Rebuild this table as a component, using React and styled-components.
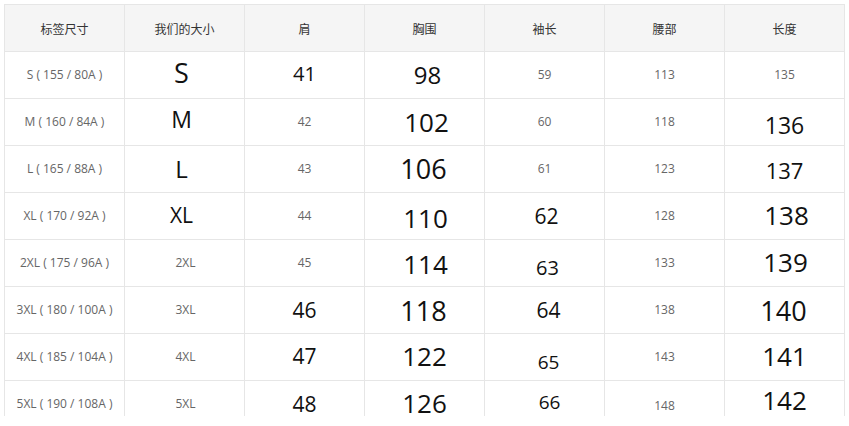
import styled, { createGlobalStyle } from "styled-components";

const headers = ["标签尺寸", "我们的大小", "肩", "胸围", "袖长", "腰部", "长度"];

// [text, fontSize, dy, dx]
const rows = [
    [["S ( 155 / 80A )"], ["S", 27, -3, -3], ["41", 20, -1.5], ["98", 24, 0, 3], ["59"], ["113"], ["135"]],
    [["M ( 160 / 84A )"], ["M", 23, -2.5, -3], ["42"], ["102", 26, 0, 2], ["60"], ["118"], ["136", 23, 3]],
    [["L ( 165 / 88A )"], ["L", 24, 0, -3], ["43"], ["106", 27, -0.5, -1], ["61"], ["123"], ["137", 22, 1]],
    [["XL ( 170 / 92A )"], ["XL", 21, -1, -3], ["44"], ["110", 26, 2, 1], ["62", 21, 0, 2], ["128"], ["138", 26, -1, 2]],
    [["2XL ( 175 / 96A )"], ["2XL", 12, 0, 1], ["45"], ["114", 26, 1, 1], ["63", 20, 5, 3], ["133"], ["139", 26, -1.5, 1]],
    [["3XL ( 180 / 100A )"], ["3XL", 12, 0, 1], ["46", 21], ["118", 27, 0, -1], ["64", 21, 0, 4], ["138"], ["140", 27, 0, -1]],
    [["4XL ( 185 / 104A )"], ["4XL", 12, 0, 1], ["47", 21, -1], ["122", 26, -1], ["65", 19, 5, 4], ["143"], ["141", 26, -1]],
    [["5XL ( 190 / 108A )"], ["5XL", 12, 0, 1], ["48", 21], ["126", 26, -1.5], ["66", 19, -2, 5], ["148", 12, 1.5], ["142", 26, -4.5]],
];

export default function App() {
    return (
        <>
            <GlobalStyle />
            <Frame>
                <Grid>
                    {headers.map((h) => (
                        <HeadCell key={h}>{h}</HeadCell>
                    ))}
                    {rows.map((row, r) =>
                        row.map(([text, size = 12, dy = 0, dx = 0], c) => (
                            <Cell key={`${r}-${c}`} $size={size} $dy={dy} $dx={dx}>
                                {text}
                            </Cell>
                        ))
                    )}
                </Grid>
            </Frame>
        </>
    );
}

const GlobalStyle = createGlobalStyle`
    body{
        margin: 0;
        background: #fff;
        font-family: "Open Sans", "Noto Sans CJK SC", sans-serif;
    }
`;

const Frame = styled.div`
    margin: 4px 0 0 4px;
    height: 412px;
    overflow: hidden;
`;

const Grid = styled.div`
    display: grid;
    grid-template-columns: repeat(7, 120px);
    grid-auto-rows: 47px;
    width: max-content;
    border-top: 1px solid #e6e6e6;
    border-left: 1px solid #e6e6e6;
`;

const HeadCell = styled.div`
    display: flex;
    align-items: center;
    justify-content: center;
    background: #f5f5f5;
    border-right: 1px solid #e6e6e6;
    border-bottom: 1px solid #e6e6e6;
    font-family: "Noto Sans CJK SC", sans-serif;
    font-size: 12px;
    color: #333;
`;

const Cell = styled.div`
    display: flex;
    align-items: center;
    justify-content: center;
    box-sizing: border-box;
    border-right: 1px solid #e6e6e6;
    border-bottom: 1px solid #e6e6e6;
    white-space: pre;
    line-height: 1;
    font-size: ${(p) => p.$size}px;
    color: ${(p) => (p.$size >= 18 ? "#111" : "#666")};
    padding: ${(p) => (p.$dy > 0 ? p.$dy * 2 : 0)}px ${(p) => (p.$dx < 0 ? -p.$dx * 2 : 0)}px
        ${(p) => (p.$dy < 0 ? -p.$dy * 2 : 0)}px ${(p) => (p.$dx > 0 ? p.$dx * 2 : 0)}px;
`;
